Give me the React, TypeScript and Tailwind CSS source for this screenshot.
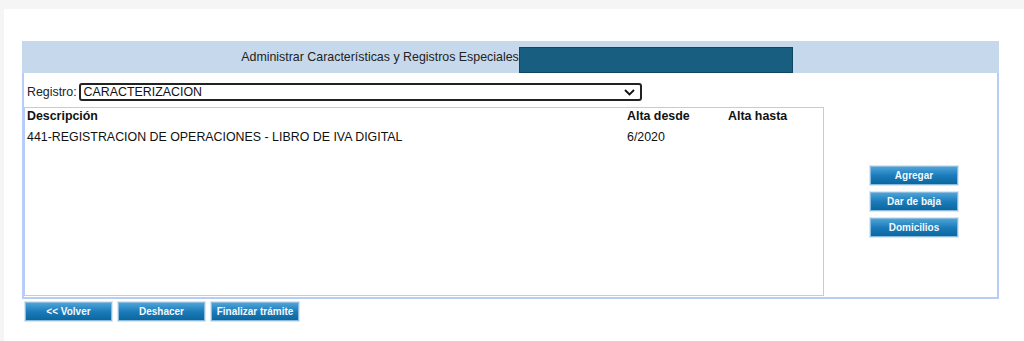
import React from "react";

function Btn({ label, w = "w-[88px]" }: { label: string; w?: string }) {
  return (
    <button
      className={`${w} h-[19px] flex items-center justify-center border border-[#8cbbe0] bg-gradient-to-b from-[#4ba3d8] via-[#1a7cba] to-[#0b679f] text-[#f4f8fc] text-[10px] font-bold leading-none shadow-[0_0_0_1px_#d9e8f4]`}
    >
      {label}
    </button>
  );
}

export default function App() {
  return (
    <div className="w-[1024px] h-[341px] bg-white overflow-hidden text-[#111] font-['Liberation_Sans',Arial,sans-serif]">
      <div className="h-[9px] bg-[#f5f5f5]" />
      <div className="flex h-[332px]">
        <div className="w-[4px] bg-[#f5f5f5]" />
        <div className="pl-[18px] pt-[32px] flex flex-col">
          {/* Panel */}
          <div className="w-[977px] h-[258px] border-2 border-t-0 border-[#b7cdf7] flex flex-col">
            <div className="h-[32px] bg-[#c6d9ec] -mx-[2px] flex items-end justify-center pl-[13px]">
              <span className="text-[12.4px] text-[#222] mb-[6px]">
                Administrar Características y Registros Especiales
              </span>
              <div className="w-[274px] h-[26px] bg-[#185e80] border border-[#0f4660]" />
            </div>
            <div className="flex flex-1">
              <div className="flex flex-col pt-[10px]">
                <div className="flex items-center pl-[3px] h-[18px]">
                  <span className="text-[12.4px] text-[#222] mr-[2px]">Registro:</span>
                  <div className="w-[563px] h-[18px] border-2 border-[#222] rounded-[3px] flex items-center justify-between pl-[3px] pr-[5px]">
                    <span className="text-[12.4px] leading-none">CARACTERIZACION</span>
                    <svg width="11" height="7" viewBox="0 0 11 7" fill="none">
                      <path d="M1 1l4.5 4.5L10 1" stroke="#111" strokeWidth="1.8" />
                    </svg>
                  </div>
                </div>
                <div className="mt-[6px] w-[800px] h-[189px] border border-[#b7cdf7] pl-[2px] text-[12.4px]">
                  <div className="flex h-[17px] items-center font-bold">
                    <span className="w-[600px]">Descripción</span>
                    <span className="w-[101px]">Alta desde</span>
                    <span>Alta hasta</span>
                  </div>
                  <div className="flex h-[20px] items-center mt-[2px]">
                    <span className="w-[600px]">441-REGISTRACION DE OPERACIONES - LIBRO DE IVA DIGITAL</span>
                    <span className="w-[101px]">6/2020</span>
                  </div>
                </div>
              </div>
              <div className="flex flex-col gap-[7px] ml-[46px] pt-[93px]">
                <Btn label="Agregar" />
                <Btn label="Dar de baja" />
                <Btn label="Domicilios" />
              </div>
            </div>
          </div>
          <div className="flex gap-[6px] mt-[3px] ml-[3px]">
            <Btn label="<< Volver" w="w-[87px]" />
            <Btn label="Deshacer" w="w-[87px]" />
            <Btn label="Finalizar trámite" w="w-[88px]" />
          </div>
        </div>
      </div>
    </div>
  );
}
